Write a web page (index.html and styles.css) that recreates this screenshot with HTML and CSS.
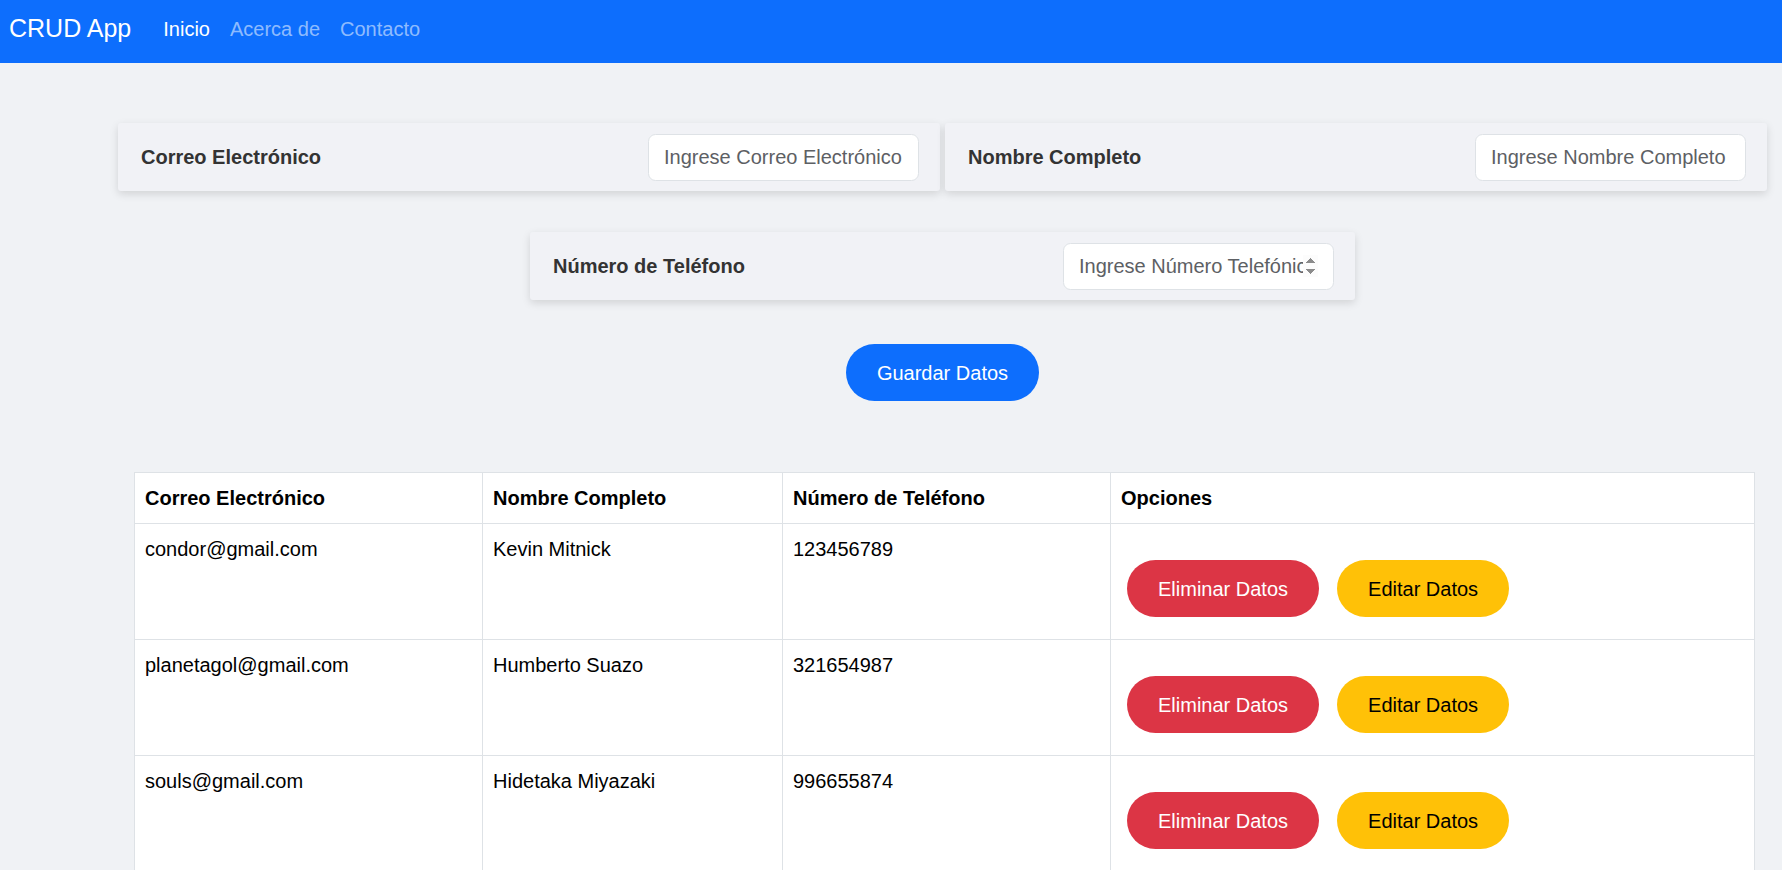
FILE: index.html
```html
<!DOCTYPE html>
<html lang="es">
<head>
<meta charset="utf-8">
<title>CRUD App</title>
<link rel="stylesheet" href="styles.css">
</head>
<body>
<nav class="navbar">
  <a class="brand" href="#">CRUD App</a>
  <a class="nav-link active" href="#">Inicio</a>
  <a class="nav-link" href="#">Acerca de</a>
  <a class="nav-link" href="#">Contacto</a>
</nav>
<main class="main">
  <section class="form-grid">
    <div class="field-card">
      <label class="field-label">Correo Electrónico</label>
      <input class="field-input" type="email" placeholder="Ingrese Correo Electrónico">
    </div>
    <div class="field-card">
      <label class="field-label">Nombre Completo</label>
      <input class="field-input" type="text" placeholder="Ingrese Nombre Completo">
    </div>
  </section>
  <section class="form-single">
    <div class="field-card field-card-center">
      <label class="field-label">Número de Teléfono</label>
      <input class="field-input" type="number" placeholder="Ingrese Número Telefónico">
    </div>
  </section>
  <div class="save-row">
    <button class="btn btn-primary">Guardar Datos</button>
  </div>
  <table class="data-table">
    <colgroup>
      <col class="c1"><col class="c2"><col class="c3"><col class="c4">
    </colgroup>
    <thead>
      <tr><th>Correo Electrónico</th><th>Nombre Completo</th><th>Número de Teléfono</th><th>Opciones</th></tr>
    </thead>
    <tbody>
      <tr>
        <td>condor@gmail.com</td><td>Kevin Mitnick</td><td>123456789</td>
        <td><div class="actions"><button class="btn btn-danger">Eliminar Datos</button><button class="btn btn-warning">Editar Datos</button></div></td>
      </tr>
      <tr>
        <td>planetagol@gmail.com</td><td>Humberto Suazo</td><td>321654987</td>
        <td><div class="actions"><button class="btn btn-danger">Eliminar Datos</button><button class="btn btn-warning">Editar Datos</button></div></td>
      </tr>
      <tr>
        <td>souls@gmail.com</td><td>Hidetaka Miyazaki</td><td>996655874</td>
        <td><div class="actions"><button class="btn btn-danger">Eliminar Datos</button><button class="btn btn-warning">Editar Datos</button></div></td>
      </tr>
    </tbody>
  </table>
</main>
</body>
</html>
```

FILE: styles.css
```css
* { box-sizing: border-box; }

html, body {
  margin: 0;
  padding: 0;
}

body {
  background: #f0f2f5;
  font-family: "Liberation Sans", Arial, sans-serif;
  font-size: 20px;
  line-height: 1.5;
  color: #212529;
}

.navbar {
  height: 63px;
  background: #0d6efd;
  display: flex;
  align-items: center;
  padding: 0 0 5px 9px;
}

.brand {
  font-size: 25px;
  color: #fff;
  text-decoration: none;
  margin-right: 22px;
}

.nav-link {
  font-size: 20px;
  color: rgba(255, 255, 255, 0.55);
  text-decoration: none;
  padding: 0 10px;
}

.nav-link.active {
  color: #fff;
}

.main {
  padding: 60px 15px 0 118px;
}

.form-grid {
  display: grid;
  grid-template-columns: 1fr 1fr;
  gap: 5px;
}

.field-card {
  display: flex;
  align-items: center;
  justify-content: space-between;
  background: #f1f2f6;
  padding: 10px 21px 10px 23px;
  height: 68px;
  box-shadow: 0 3px 8px rgba(0, 0, 0, 0.13);
  border-radius: 3px;
}

.form-single {
  display: flex;
  justify-content: center;
  margin-top: 41px;
}

.field-card-center {
  width: 825px;
}

.field-label {
  font-weight: bold;
  color: #333;
  font-size: 20px;
}

.field-input {
  width: 271px;
  height: 47px;
  padding: 7.5px 15px;
  font-family: "Liberation Sans", Arial, sans-serif;
  font-size: 20px;
  color: #212529;
  background: #fff;
  border: 1px solid #dee2e6;
  border-radius: 7.5px;
  outline: none;
}

.field-input::placeholder {
  color: #5d6064;
}

.field-input::-webkit-inner-spin-button {
  opacity: 1;
}

.save-row {
  display: flex;
  justify-content: center;
  margin-top: 44px;
}

.btn {
  font-family: "Liberation Sans", Arial, sans-serif;
  font-size: 20px;
  line-height: 30px;
  padding: 12.5px 30px;
  border: 1px solid transparent;
  border-radius: 29px;
  cursor: pointer;
}

.btn-primary {
  background: #0d6efd;
  color: #fff;
}

.btn-danger {
  background: #dc3545;
  color: #fff;
}

.btn-warning {
  background: #ffc107;
  color: #000;
}

.data-table {
  margin: 71px 13px 0 16px;
  width: 1620px;
  border-collapse: collapse;
  background: #fff;
  table-layout: fixed;
}

.c1 { width: 348px; }
.c2 { width: 300px; }
.c3 { width: 328px; }
.c4 { width: 644px; }

.data-table th,
.data-table td {
  border: 1px solid #dee2e6;
  padding: 10px;
  text-align: left;
  vertical-align: top;
  color: #000;
  font-size: 20px;
  line-height: 30px;
}

.data-table th {
  font-weight: bold;
}

.actions {
  display: flex;
  gap: 18px;
  padding: 26px 0 12px 6px;
}
```
